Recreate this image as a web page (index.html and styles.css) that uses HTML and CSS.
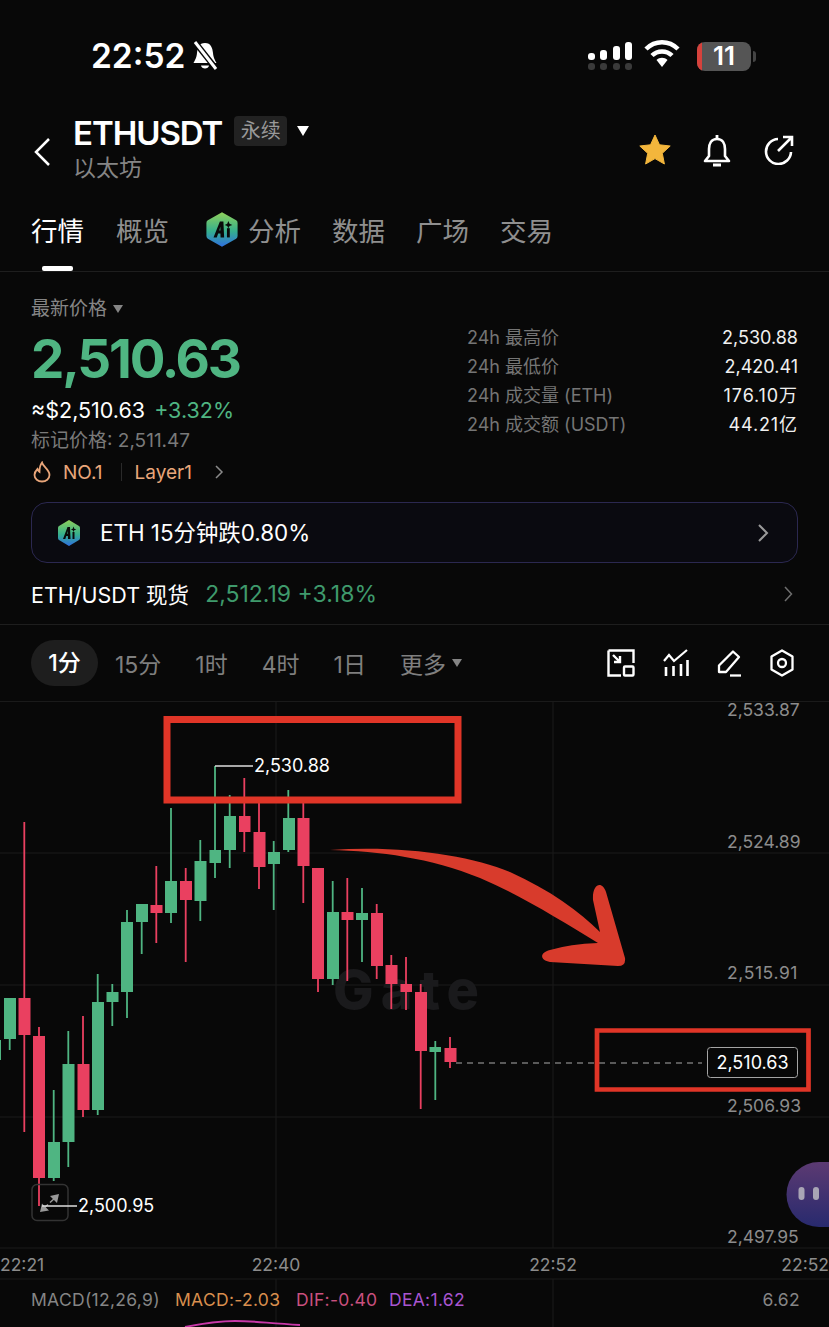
FILE: index.html
```html
<!DOCTYPE html>
<html lang="en">
<head>
    <meta charset="UTF-8">
    <meta name="viewport" content="width=device-width, initial-scale=1.0">
    <title>ETHUSDT</title>
    <link rel="stylesheet" href="styles.css">
</head>
<body>
    <!-- Shared AI badge -->
    <svg class="defs" width="0" height="0">
        <defs>
            <linearGradient id="aiGrad" x1="0" y1="0" x2="0" y2="1">
                <stop offset="0" stop-color="#8fd05a"/>
                <stop offset="0.55" stop-color="#35b08e"/>
                <stop offset="1" stop-color="#2f6fe0"/>
            </linearGradient>
            <symbol id="aiBadge" viewBox="0 0 24 28" preserveAspectRatio="none">
                <path d="M12 1 L22 7 Q23 7.600 23 9 V19 Q23 20.400 22 21 L12 27 L2 21 Q1 20.400 1 19 V9 Q1 7.600 2 7 Z" fill="url(#aiGrad)"/>
                <path d="M6 20 L10.500 8 H13 L13.500 20 H11 L10.900 17 H9.300 L8.300 20 Z M10.100 14.800 H10.900 L10.800 12 Z" fill="#0a0a0a"/>
                <path d="M15.500 13 H17.500 V20 H15.500 Z" fill="#0a0a0a"/>
                <path d="M16.500 7.500 L17.300 9.700 L19.300 10.500 L17.300 11.300 L16.500 13 L15.700 11.300 L13.900 10.500 L15.700 9.700 Z" fill="#0a0a0a"/>
            </symbol>
        </defs>
    </svg>

    <!-- Status bar -->
    <div class="status-bar">
        <div class="status-left">
            <span class="clock">22:52</span>
            <svg class="mute-icon" width="30" height="32" viewBox="0 0 30 32">
                <path d="M15 3 C9 3 7.500 8 7 13 C6.600 18 5 20 3.500 23 H26.500 C25 20 23.400 18 23 13 C22.500 8 21 3 15 3 Z" fill="#fff"/>
                <path d="M11 25.500 H19 C18.500 29.500 11.500 29.500 11 25.500 Z" fill="#fff"/>
                <path d="M4 1 L27 30" stroke="#080808" stroke-width="6"/>
                <path d="M5 2 L26 29" stroke="#fff" stroke-width="3"/>
            </svg>
        </div>
        <div class="status-right">
            <svg width="45" height="30" viewBox="0 0 45 30">
                <g fill="#fff">
                    <rect x="0" y="12" width="7" height="7" rx="3"/>
                    <rect x="12" y="9" width="7" height="10" rx="3"/>
                    <rect x="25" y="5" width="7" height="14" rx="3"/>
                    <rect x="37" y="1" width="7" height="18" rx="3"/>
                </g>
                <g fill="#3a3a3a">
                    <rect x="0" y="22" width="7" height="7" rx="3"/>
                    <rect x="12" y="22" width="7" height="7" rx="3"/>
                    <rect x="25" y="22" width="7" height="7" rx="3"/>
                    <rect x="37" y="22" width="7" height="7" rx="3"/>
                </g>
            </svg>
            <svg class="wifi-icon" width="36" height="28" viewBox="0 0 36 28">
                <path d="M2 9 C11 0 25 0 34 9" fill="none" stroke="#fff" stroke-width="4.500"/>
                <path d="M8 15.500 C13.500 10 22.500 10 28 15.500" fill="none" stroke="#fff" stroke-width="4.500"/>
                <path d="M12.500 20 C15.500 17 20.500 17 23.500 20 L18 27 Z" fill="#fff"/>
            </svg>
            <div class="battery">
                <span class="battery-low"></span>
                <span class="battery-num">11</span>
            </div>
            <span class="battery-cap"></span>
        </div>
    </div>

    <!-- Title -->
    <div class="title-bar">
        <svg class="back-icon" width="18" height="30" viewBox="0 0 18 30">
            <path d="M16 2 L3 15 L16 28" fill="none" stroke="#fff" stroke-width="2.500"/>
        </svg>
        <div class="title-text">
            <div class="title-top">
                <span class="symbol">ETHUSDT</span>
                <span class="badge">永续</span>
                <span class="caret-white"></span>
            </div>
            <div class="coin-name">以太坊</div>
        </div>
        <div class="title-actions">
            <svg width="32" height="32" viewBox="0 0 32 32">
                <path d="M16 1 L20.500 10.800 L31.200 12 L23.300 19.300 L25.400 30 L16 24.600 L6.600 30 L8.700 19.300 L0.800 12 L11.500 10.800 Z" fill="#f3b63c" stroke="#f3b63c" stroke-linejoin="round"/>
            </svg>
            <svg width="30" height="33" viewBox="0 0 30 33">
                <path d="M15 5 C9 5 7 10 7 15 V22 L3 27 H27 L23 22 V15 C23 10 21 5 15 5 Z" fill="none" stroke="#fff" stroke-width="2.600" stroke-linejoin="round"/>
                <path d="M15 1 V5 M11 31 H19" stroke="#fff" stroke-width="2.800"/>
            </svg>
            <svg width="31" height="30" viewBox="0 0 31 30">
                <path d="M15 4 A12.500 12.500 0 1 0 28 17" fill="none" stroke="#fff" stroke-width="2.600"/>
                <path d="M15 16 L29 2 M20 2 H29 V11" fill="none" stroke="#fff" stroke-width="2.600"/>
            </svg>
        </div>
    </div>

    <!-- Tabs -->
    <div class="tabs">
        <span class="tab active">行情</span>
        <span class="tab">概览</span>
        <span class="tab tab-ai">
            <svg width="34" height="37"><use href="#aiBadge"/></svg>
            分析
        </span>
        <span class="tab">数据</span>
        <span class="tab">广场</span>
        <span class="tab">交易</span>
    </div>

    <!-- Quote -->
    <div class="quote">
        <div class="quote-left">
            <div class="price-label">最新价格 <span class="caret-gray"></span></div>
            <div class="last-price">2,510.63</div>
            <div class="fiat-row"><span class="fiat">≈$2,510.63</span><span class="green">+3.32%</span></div>
            <div class="mark-price">标记价格: 2,511.47</div>
            <div class="tag-row">
                <svg width="18" height="22" viewBox="0 0 18 22">
                    <path d="M9 1.500 C10 6 16.500 8.500 16.500 14 C16.500 18 13 20.500 9 20.500 C5 20.500 1.500 18 1.500 14 C1.500 11 3 9.500 4.500 8 C5 10 5.500 10.500 6.500 11 C6.500 7.500 7 4 9 1.500 Z" fill="none" stroke="#e9a67a" stroke-width="1.800"/>
                </svg>
                <span class="tag-no">NO.1</span>
                <span class="tag-sep"></span>
                <span class="tag-name">Layer1</span>
                <svg width="10" height="16" viewBox="0 0 10 16"><path d="M2 2 L8 8 L2 14" fill="none" stroke="#8a8a8a" stroke-width="1.500"/></svg>
            </div>
        </div>
        <div class="quote-right">
            <div class="stat-row"><span>24h 最高价</span><b>2,530.88</b></div>
            <div class="stat-row"><span>24h 最低价</span><b>2,420.41</b></div>
            <div class="stat-row"><span>24h 成交量 (ETH)</span><b class="wide">176.10万</b></div>
            <div class="stat-row"><span>24h 成交额 (USDT)</span><b class="wide">44.21亿</b></div>
        </div>
    </div>

    <!-- AI banner -->
    <div class="banner">
        <svg width="24" height="28"><use href="#aiBadge"/></svg>
        <span class="banner-text">ETH 15分钟跌0.80%</span>
        <svg class="banner-arrow" width="12" height="20" viewBox="0 0 12 20"><path d="M2 2 L10 10 L2 18" fill="none" stroke="#9a9a9a" stroke-width="2"/></svg>
    </div>

    <!-- Spot row -->
    <div class="spot-row">
        <span class="spot-name">ETH/USDT 现货</span>
        <span class="spot-price">2,512.19 +3.18%</span>
        <svg class="spot-arrow" width="10" height="16" viewBox="0 0 10 16"><path d="M2 1 L8.500 8 L2 15" fill="none" stroke="#6e6e6e" stroke-width="1.500"/></svg>
    </div>

    <!-- Timeframes -->
    <div class="timeframes">
        <span class="tf active">1分</span>
        <span class="tf">15分</span>
        <span class="tf">1时</span>
        <span class="tf">4时</span>
        <span class="tf">1日</span>
        <span class="tf tf-more">更多 <span class="caret-gray"></span></span>
        <div class="tf-tools">
            <svg width="28" height="28" viewBox="0 0 28 28">
                <path d="M1.500 1.500 H26.500 V14 M14 26.500 H1.500 V1.500" fill="none" stroke="#fff" stroke-width="2.400"/>
                <rect x="17" y="17.500" width="9.500" height="9" rx="1" fill="none" stroke="#fff" stroke-width="2.400"/>
                <path d="M6 6 L13 13 M13 7 V13 H7" fill="none" stroke="#fff" stroke-width="2.400"/>
            </svg>
            <svg width="26" height="28" viewBox="0 0 26 28">
                <path d="M1 12 L6 6 L11 12 L24 1" fill="none" stroke="#fff" stroke-width="2.200"/>
                <path d="M3 18 V27 M10.500 17 V27 M18 15 V27 M24.500 11 V27" stroke="#fff" stroke-width="2.600"/>
            </svg>
            <svg width="25" height="28" viewBox="0 0 25 28">
                <path d="M16 2.500 L22 8 L9 23 H2 V16.500 Z" fill="none" stroke="#fff" stroke-width="2.300" stroke-linejoin="round"/>
                <path d="M13 26.500 H24" stroke="#fff" stroke-width="2.300"/>
            </svg>
            <svg width="24" height="28" viewBox="0 0 24 28">
                <path d="M12 1.500 L22.500 7.500 V20.500 L12 26.500 L1.500 20.500 V7.500 Z" fill="none" stroke="#fff" stroke-width="2.300" stroke-linejoin="round"/>
                <circle cx="12" cy="14" r="4" fill="none" stroke="#fff" stroke-width="2.300"/>
            </svg>
        </div>
    </div>

    <!-- Chart: coordinates are page pixels, y starts at 702 -->
    <div class="chart">
        <svg class="chart-svg" width="829" height="625" viewBox="0 702 829 625">
            <g class="grid">
                <path d="M0 853H829M0 985H829M0 1117H829M0 1248H829M0 1279H829"/>
                <path d="M276 702V1248M553 702V1248M276 1279V1327M553 1279V1327"/>
            </g>

            <text class="watermark" x="333" y="1009">Gate</text>

            <g class="candles up">
                <rect x="-0.500" y="1040" width="1.500" height="20"/>
                <rect x="8.800" y="998" width="1.800" height="52"/><rect x="4" y="998" width="12" height="41"/>
                <rect x="52.800" y="1090" width="1.800" height="91"/><rect x="48" y="1142" width="12" height="36"/>
                <rect x="67.400" y="1031" width="1.800" height="136"/><rect x="62.500" y="1064" width="12" height="78"/>
                <rect x="96.800" y="974" width="1.800" height="141"/><rect x="92" y="1002" width="12" height="108"/>
                <rect x="111.400" y="984" width="1.800" height="42"/><rect x="106.500" y="992" width="12" height="10"/>
                <rect x="126.100" y="910" width="1.800" height="108"/><rect x="121" y="922" width="12" height="70"/>
                <rect x="140.800" y="904" width="1.800" height="50"/><rect x="136" y="904" width="12" height="18"/>
                <rect x="170.100" y="808" width="1.800" height="115"/><rect x="165" y="881" width="12" height="32"/>
                <rect x="199.400" y="840" width="1.800" height="81"/><rect x="194.500" y="861" width="12" height="40"/>
                <rect x="214.100" y="766" width="1.800" height="112"/><rect x="209.500" y="850" width="11.500" height="13"/>
                <rect x="228.800" y="795" width="1.800" height="73"/><rect x="224" y="816" width="12" height="34"/>
                <rect x="272.800" y="841" width="1.800" height="69"/><rect x="268" y="852" width="12" height="12"/>
                <rect x="287.400" y="790" width="1.800" height="62"/><rect x="283" y="818" width="12" height="32"/>
                <rect x="331.800" y="881" width="1.800" height="104"/><rect x="327" y="912" width="12" height="67"/>
                <rect x="361.100" y="888" width="1.800" height="74"/><rect x="356" y="913" width="12" height="7"/>
                <rect x="434.400" y="1041" width="1.800" height="59"/><rect x="429.500" y="1047" width="11.500" height="5"/>
            </g>
            <g class="candles down">
                <rect x="23.400" y="822" width="1.800" height="310"/><rect x="18.500" y="998" width="12" height="37"/>
                <rect x="38.100" y="1027" width="1.800" height="179"/><rect x="33" y="1036" width="12" height="142"/>
                <rect x="82.100" y="1016" width="1.800" height="101"/><rect x="77.500" y="1064" width="12" height="46"/>
                <rect x="155.400" y="866" width="1.800" height="77"/><rect x="150.500" y="905" width="12" height="8"/>
                <rect x="184.800" y="868" width="1.800" height="94"/><rect x="180" y="881" width="12" height="19"/>
                <rect x="243.400" y="778" width="1.800" height="74"/><rect x="239" y="816" width="11.500" height="16"/>
                <rect x="258.100" y="800" width="1.800" height="89"/><rect x="253.500" y="832" width="12" height="35"/>
                <rect x="302.400" y="800" width="1.800" height="103"/><rect x="297.500" y="818" width="12" height="48"/>
                <rect x="317.100" y="868" width="1.800" height="124"/><rect x="312" y="868" width="12" height="111"/>
                <rect x="346.400" y="878" width="1.800" height="103"/><rect x="341.500" y="912" width="12" height="8"/>
                <rect x="375.800" y="904" width="1.800" height="75"/><rect x="371" y="913" width="12" height="53"/>
                <rect x="390.400" y="955" width="1.800" height="54"/><rect x="385.500" y="965" width="12" height="19"/>
                <rect x="405.100" y="957" width="1.800" height="53"/><rect x="400.500" y="984" width="11.500" height="8"/>
                <rect x="419.800" y="984" width="1.800" height="125"/><rect x="415" y="992" width="12" height="59"/>
                <rect x="449.100" y="1037" width="1.800" height="31"/><rect x="444.500" y="1048" width="12" height="14"/>
            </g>

            <!-- expand button -->
            <rect class="expand-box" x="32" y="1184.500" width="36" height="36" rx="5"/>
            <path class="expand-arrow" d="M59 1194 L50 1196 L57 1203 Z M40 1212 L49 1210.500 L42 1203.500 Z"/>
            <path class="expand-shaft" d="M55 1198 L50 1202.500 M44 1208 L48 1204.500"/>

            <!-- extreme markers -->
            <path class="marker" d="M215 766H253M42 1206H77"/>
            <text class="mark-text" x="254" y="772">2,530.88</text>
            <text class="mark-text" x="78" y="1212">2,500.95</text>

            <!-- price axis -->
            <g class="axis">
                <text x="727" y="716">2,533.87</text>
                <text x="727" y="848">2,524.89</text>
                <text class="tick-wide" x="727" y="979">2,515.91</text>
                <text x="727" y="1112">2,506.93</text>
                <text x="727" y="1243">2,497.95</text>
                <text x="0" y="1271">22:21</text>
                <text class="mid" x="276" y="1271">22:40</text>
                <text class="mid" x="553" y="1271">22:52</text>
                <text class="end" x="829" y="1271">22:52</text>
            </g>

            <!-- last price -->
            <path class="last-line" d="M456 1063H702"/>
            <rect class="last-box" x="707.500" y="1047.500" width="90" height="30" rx="3"/>
            <text class="last-text" x="752.500" y="1069">2,510.63</text>

            <!-- MACD -->
            <g class="macd">
                <text class="macd-name" x="31" y="1306">MACD(12,26,9)</text>
                <text class="macd-val" x="175" y="1306">MACD:-2.03</text>
                <text class="macd-dif" x="296" y="1306">DIF:-0.40</text>
                <text class="macd-dea" x="389" y="1306">DEA:1.62</text>
                <text class="macd-name end" x="800" y="1306">6.62</text>
            </g>
            <path class="macd-line" d="M185 1327 C200 1324 215 1321 235 1321 C255 1321 265 1323 300 1325"/>

            <!-- hand drawn annotations -->
            <g class="annot">
                <path d="M167 719.500 H458 V800 H167 Z"/>
                <path class="thin" d="M597 1030.500 H808.500 V1089.500 H597 Z"/>
            </g>
            <path class="annot-arrow" d="M330 850 C400 845 470 855 510 872 C550 890 580 912 600 932 L593 900 C592 884 602 880 606 892 L625 958 Q626 966 618 966 L550 962 C540 960 539 953 550 950 Q570 944 598 943 C560 920 520 895 480 878 C430 858 380 851 330 850 Z"/>

            <!-- floating handle -->
            <path class="float-btn" d="M829 1162 H819 A32 32 0 0 0 819 1227 H829 Z"/>
            <rect class="float-bar" x="798.500" y="1187" width="6" height="13" rx="3"/>
            <rect class="float-bar" x="813" y="1187" width="6" height="13" rx="3"/>
            <defs>
                <linearGradient id="floatGrad" x1="0" y1="0" x2="0" y2="1">
                    <stop offset="0" stop-color="#5c3a72"/>
                    <stop offset="1" stop-color="#282a6e"/>
                </linearGradient>
            </defs>
        </svg>
    </div>
</body>
</html>
```
FILE: styles.css
```css
html, body {
    margin: 0;
    padding: 0;
    height: 1327px;
    overflow: hidden;
}

body {
    font-family: Inter, "Noto Sans CJK SC", sans-serif;
    background: #080808;
    color: #fff;
}

.defs {
    position: absolute;
}

/* Status bar */
.status-bar {
    height: 112px;
    display: flex;
    align-items: center;
    justify-content: space-between;
    padding: 0 73px 0 91px;
}

.status-left {
    display: flex;
    align-items: center;
    gap: 5px;
}

.clock {
    font-size: 33.500px;
    font-weight: 600;
}

.status-right {
    display: flex;
    align-items: center;
}

.wifi-icon {
    margin-left: 11px;
    margin-top: -4px;
}

.battery {
    position: relative;
    width: 54px;
    height: 29px;
    margin-left: 17px;
    background: #555;
    border-radius: 8px;
    overflow: hidden;
    display: flex;
    align-items: center;
    justify-content: center;
}

.battery-low {
    position: absolute;
    left: 0;
    top: 0;
    bottom: 0;
    width: 5px;
    background: #d6423c;
}

.battery-num {
    font-size: 26px;
    font-weight: 600;
    line-height: 1;
}

.battery-cap {
    width: 3px;
    height: 11px;
    margin-left: 2px;
    background: #444;
    border-radius: 0 3px 3px 0;
}

/* Title */
.title-bar {
    height: 80px;
    display: flex;
    align-items: center;
    padding-left: 33px;
    padding-right: 35px;
}

.title-text {
    margin-left: 22px;
    margin-top: -10px;
}

.title-top {
    display: flex;
    align-items: center;
    height: 42px;
}

.symbol {
    font-size: 33px;
    font-weight: 600;
    letter-spacing: -1.050px;
}

.badge {
    margin-left: 12px;
    margin-bottom: 4px;
    width: 53px;
    height: 30px;
    line-height: 30px;
    text-align: center;
    background: #222;
    border-radius: 4px;
    color: #999;
    font-size: 20px;
}

.caret-white {
    margin-left: 10px;
    margin-bottom: 4px;
    border-left: 6.500px solid transparent;
    border-right: 6.500px solid transparent;
    border-top: 10px solid #fff;
}

.coin-name {
    font-size: 23px;
    line-height: 28px;
    color: #858585;
}

.title-actions {
    margin-left: auto;
    margin-top: -4px;
    display: flex;
    align-items: center;
    gap: 31px;
}

/* Tabs */
.tabs {
    position: relative;
    height: 75px;
    padding-bottom: 4px;
    display: flex;
    align-items: center;
    gap: 31px;
    padding-left: 31px;
    border-bottom: 1px solid #1e1e1e;
    font-size: 26.500px;
    color: #8f8f8f;
}

.tab {
    position: relative;
    display: flex;
    align-items: center;
    height: 40px;
}

.tab.active {
    color: #fff;
    margin-right: 1px;
}

.tab.active::after {
    content: "";
    position: absolute;
    left: 11px;
    width: 31px;
    height: 5px;
    top: 56px;
    background: #fff;
    border-radius: 2px;
}

.tab-ai svg {
    margin: 0 9px 0 5px;
}

/* Quote */
.quote {
    display: flex;
    justify-content: space-between;
    height: 222px;
    padding: 24px 31px 0;
    box-sizing: border-box;
}

.price-label {
    font-size: 19px;
    line-height: 26px;
    color: #858585;
    display: flex;
    align-items: center;
    gap: 6px;
}

.caret-gray {
    display: inline-block;
    border-left: 5.500px solid transparent;
    border-right: 5.500px solid transparent;
    border-top: 8px solid #858585;
}

.last-price {
    font-size: 53px;
    font-weight: 700;
    line-height: 66px;
    margin-top: 4px;
    color: #4fb582;
    letter-spacing: -2.200px;
}

.fiat-row {
    display: flex;
    gap: 9px;
    font-size: 21.500px;
    line-height: 28px;
    margin-top: 4px;
}

.green {
    color: #4fb582;
}

.mark-price {
    font-size: 19px;
    line-height: 30px;
    margin-top: 2px;
    color: #7a7a7a;
}

.tag-row {
    display: flex;
    align-items: center;
    height: 30px;
    margin-top: 1px;
    font-size: 19px;
    color: #e9a67a;
    padding-left: 2px;
}

.tag-no {
    margin-left: 12px;
}

.tag-sep {
    width: 1px;
    height: 18px;
    background: #2a2a2a;
    margin: 0 13px 0 18px;
}

.tag-row svg:last-child {
    margin-left: 22px;
}

.quote-right {
    width: 331px;
    padding-top: 27px;
}

.stat-row {
    display: flex;
    justify-content: space-between;
    height: 29px;
    line-height: 29px;
    font-size: 18px;
    color: #757575;
}

.stat-row b {
    color: #f0f0f0;
    font-weight: 400;
}

.stat-row b.wide {
    letter-spacing: 0.900px;
}

/* Banner */
.banner {
    height: 61px;
    margin: 8px 31px 0;
    box-sizing: border-box;
    border: 1px solid #2b2850;
    border-radius: 16px;
    background: #0a0a10;
    display: flex;
    align-items: center;
    padding: 0 28px 0 25px;
}

.banner-text {
    margin-left: 19px;
    margin-bottom: 3px;
    font-size: 22.400px;
}

.banner-arrow {
    margin-left: auto;
}

/* Spot */
.spot-row {
    height: 62px;
    box-sizing: border-box;
    display: flex;
    align-items: center;
    padding: 0 36px 0 31px;
    border-bottom: 1px solid #1e1e1e;
}

.spot-name {
    font-size: 21.500px;
}

.spot-price {
    margin-left: 16px;
    font-size: 23px;
    color: #3f9a6c;
}

.spot-arrow {
    margin-left: auto;
}

/* Timeframes */
.timeframes {
    height: 77px;
    box-sizing: border-box;
    display: flex;
    align-items: center;
    padding: 0 35px 0 31px;
    border-bottom: 1px solid #1a1a1a;
    font-size: 23px;
    color: #7f7f7f;
}

.tf {
    margin-right: 34px;
}

.tf.active {
    width: 67px;
    height: 46px;
    line-height: 46px;
    text-align: center;
    border-radius: 23px;
    background: #1e1e1e;
    color: #fff;
    font-weight: 500;
    margin-right: 17px;
}

.tf-more {
    display: flex;
    align-items: center;
    gap: 6px;
}

.tf-tools {
    margin-left: auto;
    display: flex;
    align-items: center;
    gap: 28px;
}

/* Chart */
.chart {
    height: 625px;
    background: #080808;
}

.chart-svg {
    display: block;
    overflow: visible;
}

.grid path {
    fill: none;
    stroke: #1a1a1a;
    stroke-width: 1;
}

.watermark {
    font-size: 54px;
    font-weight: 800;
    fill: #1a1a1c;
    letter-spacing: 7px;
}

.candles.up {
    fill: #4fb582;
}

.candles.down {
    fill: #ea4060;
}

.marker {
    fill: none;
    stroke: #ddd;
    stroke-width: 1.500;
}

.mark-text {
    font-size: 18px;
    fill: #fff;
}

.expand-box {
    fill: none;
    stroke: #333;
    stroke-width: 1.500;
}

.expand-arrow {
    fill: #999;
}

.expand-shaft {
    fill: none;
    stroke: #999;
    stroke-width: 1.500;
}

.axis text {
    font-size: 17.500px;
    fill: #8c8c8c;
}

.axis .tick-wide {
    letter-spacing: 0.600px;
}

.end {
    text-anchor: end;
}

.mid {
    text-anchor: middle;
}

.last-line {
    stroke: #aaa;
    stroke-width: 1.200;
    stroke-dasharray: 6 5;
}

.last-box {
    fill: #080808;
    stroke: #a5a5a5;
    stroke-width: 1;
}

.last-text {
    font-size: 18px;
    fill: #fff;
    text-anchor: middle;
}

.macd text {
    font-size: 17.500px;
    letter-spacing: 0.300px;
}

.macd-name {
    fill: #858585;
}

.macd-val {
    fill: #d98f4e;
}

.macd-dif {
    fill: #c9507f;
}

.macd-dea {
    fill: #a855d0;
}

.macd-line {
    fill: none;
    stroke: #c838a8;
    stroke-width: 2;
}

.annot path {
    fill: none;
    stroke: #e03527;
    stroke-width: 7;
}

.annot .thin {
    stroke-width: 4.700;
}

.annot-arrow {
    fill: #d83b2c;
}

.float-btn {
    fill: url(#floatGrad);
}

.float-bar {
    fill: #a9a5b5;
}
```
